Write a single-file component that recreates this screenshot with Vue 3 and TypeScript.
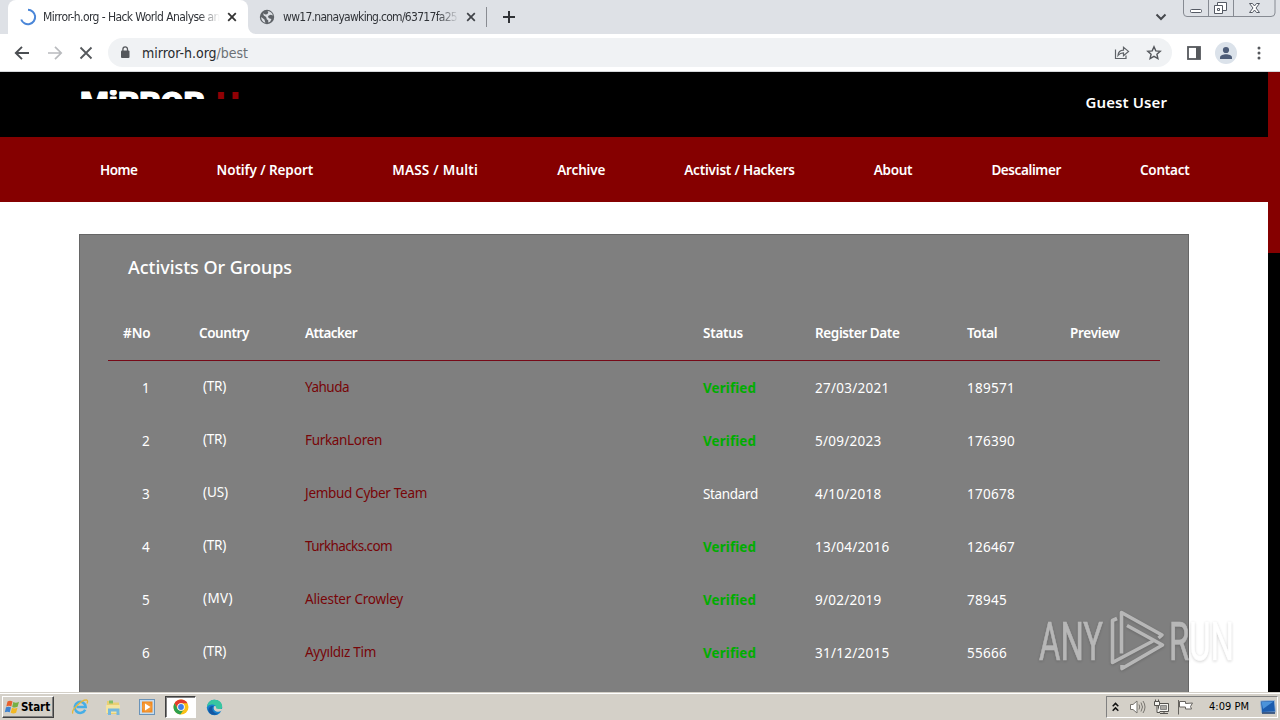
<script setup lang="ts">
import type { Directive } from 'vue'

// Tracks the text so that it takes up the given width in pixels.
const vFit: Directive<HTMLElement, number> = {
  mounted(el, { value }) {
    const n = (el.textContent ?? '').trim().length
    el.style.letterSpacing = (value - el.getBoundingClientRect().width) / n + 'px'
  },
}

interface Row {
  no: number
  country: string
  cw: number
  name: string
  nw: number
  verified: boolean
  date: string
  dw: number
  total: string
  tw: number
}

const nav: { label: string; w: number }[] = [
  { label: 'Home', w: 37.5 },
  { label: 'Notify / Report', w: 96.5 },
  { label: 'MASS / Multi', w: 86 },
  { label: 'Archive', w: 48 },
  { label: 'Activist / Hackers', w: 110.5 },
  { label: 'About', w: 38.5 },
  { label: 'Descalimer', w: 69.5 },
  { label: 'Contact', w: 49.5 },
]

const heads: { label: string; w: number }[] = [
  { label: '#No', w: 27.5 },
  { label: 'Country', w: 50 },
  { label: 'Attacker', w: 52 },
  { label: 'Status', w: 40 },
  { label: 'Register Date', w: 84.5 },
  { label: 'Total', w: 30 },
  { label: 'Preview', w: 49.5 },
]

const rows: Row[] = [
  { no: 1, country: '(TR)', cw: 23, name: 'Yahuda', nw: 44, verified: true, date: '27/03/2021', dw: 74.5, total: '189571', tw: 48 },
  { no: 2, country: '(TR)', cw: 23, name: 'FurkanLoren', nw: 77, verified: true, date: '5/09/2023', dw: 66.5, total: '176390', tw: 48 },
  { no: 3, country: '(US)', cw: 25, name: 'Jembud Cyber Team', nw: 122, verified: false, date: '4/10/2018', dw: 66.5, total: '170678', tw: 48 },
  { no: 4, country: '(TR)', cw: 23, name: 'Turkhacks.com', nw: 87, verified: true, date: '13/04/2016', dw: 74.5, total: '126467', tw: 48 },
  { no: 5, country: '(MV)', cw: 30, name: 'Aliester Crowley', nw: 98, verified: true, date: '9/02/2019', dw: 66.5, total: '78945', tw: 40 },
  { no: 6, country: '(TR)', cw: 23, name: 'Ayyıldız Tim', nw: 71, verified: true, date: '31/12/2015', dw: 74.5, total: '55666', tw: 40 },
]
</script>

<template>
  <div class="screen">
    <header class="tabs">
      <div class="tab active">
        <svg class="spin" width="18" height="18" viewBox="0 0 18 18"><path d="M9 1.8A7.2 7.2 0 1 1 2.2 11.5" fill="none" stroke="#4a86d8" stroke-width="2" /></svg>
        <div class="title"><span v-fit="183">Mirror-h.org - Hack World Analyse and</span></div>
        <svg class="x" width="10" height="10" viewBox="0 0 10 10"><path d="M1.2 1.2l7.6 7.6M8.8 1.2L1.2 8.8" stroke="#333" stroke-width="1.8" /></svg>
        <svg class="foot" width="8" height="8"><path d="M0 0v8h8A8 8 0 0 1 0 0z" fill="#fff" /></svg>
      </div>
      <div class="tab">
        <svg class="globe" width="16" height="16" viewBox="0 0 16 16">
          <circle cx="8" cy="8" r="7.2" fill="#5f6368" />
          <path d="M2.2 8l3.2 2.6 1 3.2C3.600 13.200 2 10.500 2.200 8zM4 4.200l2.300 1.200 1.900-.2 1.100-1.500L8.600 2c2.800.1 4.900 2.100 5.300 4.500l-2.100-.8-2.100.8-.8 1.600 1.600 1.500 2 .5-1.400 2.700-1.900.8.1-2.200-1.500-1.200-.7-2.200-2.300-1.400z" fill="#dee1e6" />
        </svg>
        <div class="title second"><span v-fit="174">ww17.nanayawking.com/63717fa25</span></div>
        <svg class="x" width="10" height="10" viewBox="0 0 10 10"><path d="M1.2 1.2l7.6 7.6M8.8 1.2L1.2 8.8" stroke="#3f4247" stroke-width="1.7" /></svg>
      </div>
      <i class="sep"></i>
      <svg class="plus" width="12" height="12"><path d="M6 0v12M0 6h12" stroke="#303236" stroke-width="2" /></svg>
      <svg class="chev" width="12" height="8"><path d="M1.500 1.500l4.500 4.500 4.500-4.500" fill="none" stroke="#45484d" stroke-width="2" /></svg>
      <svg class="winbtns" width="94" height="17" viewBox="0 0 94 17" fill="none" stroke="#868a92">
        <path d="M.5 0v13q0 3.500 3.500 3.500h84q4 0 4-3.500V0M25.500 0v16M50.500 0v16" />
        <rect x="7.500" y="9.500" width="11" height="3" rx="1" fill="#fff" stroke="#555a64" />
        <path d="M34.500 2.500h9v8h-9z" fill="#fff" stroke="#555a64" /><path d="M31.500 5.500h8v8h-8z" fill="#fff" stroke="#555a64" /><path d="M34.500 8.500h2v2h-2z" stroke="#555a64" />
        <path d="M66.500 3.500h3l2 2.500 2-2.500h3l-3.500 4.500 3.500 4.500h-3l-2-2.500-2 2.500h-3l3.500-4.500z" fill="#fff" stroke="#555a64" />
      </svg>
    </header>

    <div class="toolbar">
      <svg class="back" width="16" height="14" viewBox="0 0 16 14" fill="none" stroke="#4b4e52" stroke-width="1.900"><path d="M15 7H2M8 .8L1.800 7 8 13.200" /></svg>
      <svg class="fwd" width="16" height="14" viewBox="0 0 16 14" fill="none" stroke="#b9bbbe" stroke-width="1.700"><path d="M1 7h13M8 .8L14.200 7 8 13.200" /></svg>
      <svg class="stop" width="14" height="14" viewBox="0 0 14 14" stroke="#55585c" stroke-width="1.800"><path d="M1.500 1.500l11 11M12.500 1.500l-11 11" /></svg>
      <div class="omni">
        <svg class="lock" width="10" height="13" viewBox="0 0 10 13"><rect x="1" y="4.500" width="8.500" height="7.500" rx="1" fill="#54575b" /><path d="M2.900 5V3.200a2.300 2.300 0 0 1 4.600 0V5" fill="none" stroke="#54575b" stroke-width="1.300" /></svg>
        <span v-fit="106" class="url">mirror-h.org<em>/best</em></span>
        <svg class="share" width="16" height="15" viewBox="0 0 16 15" fill="none" stroke="#5f6368" stroke-width="1.200"><path d="M1.500 4.500v9h10.500v-3M4 10.500c.3-3.500 2-5.200 5.500-5.300V2.200l5 4.200-5 4.200V7.800c-2.500 0-4 .7-5.500 2.700z" /></svg>
        <svg class="star" width="16" height="16" viewBox="0 0 16 16"><path d="M8 1.800l1.800 4.100 4.400.4-3.300 2.900 1 4.400L8 11.300l-3.900 2.300 1-4.400-3.300-2.900 4.400-.4z" fill="none" stroke="#54575c" stroke-width="1.400" /></svg>
      </div>
      <svg class="panelicon" width="14" height="14"><rect x="1" y="1" width="12" height="12" fill="none" stroke="#55585c" stroke-width="1.800" /><path d="M9 1h4v12H9z" fill="#55585c" /></svg>
      <svg class="user" width="22" height="22"><circle cx="11" cy="11" r="11" fill="#dbe2ea" /><circle cx="11" cy="8" r="3.100" fill="#4d5c78" /><path d="M5 17v-1.500c0-2.500 3.500-3.300 6-3.300s6 .8 6 3.300V17z" fill="#4d5c78" /></svg>
      <svg class="dots" width="4" height="14" fill="#55585c"><circle cx="2" cy="2" r="1.500" /><circle cx="2" cy="7" r="1.500" /><circle cx="2" cy="12" r="1.500" /></svg>
    </div>

    <div class="view">
      <main class="page">
        <div class="brand">
          <svg class="logo" width="164" height="9" viewBox="0 0 164 9" font-family="Roboto" font-weight="900" font-size="31" stroke-width="1" stroke-linejoin="round">
            <text x="1" y="24" textLength="125" lengthAdjust="spacingAndGlyphs" fill="#fff" stroke="#fff">MiRROR</text>
            <text x="137" y="24" textLength="24" lengthAdjust="spacingAndGlyphs" fill="#900004">H</text>
          </svg>
          <span v-fit="81.5" class="guest">Guest User</span>
        </div>
        <nav class="menu">
          <span v-for="n in nav" :key="n.label" v-fit="n.w">{{ n.label }}</span>
        </nav>
        <section class="card">
          <h2><span v-fit="164">Activists Or Groups</span></h2>
          <div class="row head">
            <div v-for="h in heads" :key="h.label"><span v-fit="h.w">{{ h.label }}</span></div>
          </div>
          <div v-for="r in rows" :key="r.no" class="row">
            <div class="no">{{ r.no }}</div>
            <div class="country"><span v-fit="r.cw">{{ r.country }}</span></div>
            <div class="name"><span v-fit="r.nw">{{ r.name }}</span></div>
            <div><span v-if="r.verified" v-fit="53" class="ok">Verified</span><span v-else v-fit="55">Standard</span></div>
            <div><span v-fit="r.dw">{{ r.date }}</span></div>
            <div><span v-fit="r.tw">{{ r.total }}</span></div>
            <div></div>
          </div>
        </section>
      </main>
      <aside class="scroll"><i></i></aside>
    </div>

    <footer class="taskbar">
      <button class="start">
        <svg width="17" height="17" viewBox="0 0 17 17">
          <path d="M3.500 2.500q2.500-1.500 5 0L7.300 7.500q-2.500-1.300-5 0z" fill="#e8602c" /><path d="M9.300 3q2.700 1.400 5.700-.3l-1.400 5q-2.800 1.400-5.400.2z" fill="#76b043" />
          <path d="M2 8.300q2.700-1.300 5 0L5.800 13.300q-2.500-1.300-5 0z" fill="#3f83d0" /><path d="M8 8.800q2.600 1.300 5.500 0l-1.400 5q-2.700 1.500-5.400 0z" fill="#f2b824" />
        </svg>
        <span v-fit="29">Start</span>
      </button>
      <svg class="ie" width="18" height="18" viewBox="0 0 18 18" fill="none"><path d="M14.200 11.700A5.500 5.500 0 1 1 14.700 9H5.500" stroke="#46aee6" stroke-width="2.500" /><path d="M2 15.500C-.5 12.500 10.500 1.500 15.500 2c1.500.3 1.200 2 .5 3.500" stroke="#e5b83c" stroke-width="1.300" /></svg>
      <svg class="folder" width="17" height="17" viewBox="0 0 17 17"><path d="M2 2h5l1 1.500h6V15H2z" fill="#e9cf72" /><path d="M4 1.500h4v3H4z" fill="#83be66" /><path d="M1 6h14v8H1z" fill="#f4e4a0" /><path d="M3 16V9.500h11.500V16h-3v-3.500H6V16z" fill="#75b8de" /></svg>
      <svg class="wmp" width="16" height="16" viewBox="0 0 16 16"><rect x=".5" y=".5" width="15" height="15" fill="#c4dcf0" stroke="#6a93b8" /><rect x="3" y="2.500" width="10.500" height="11" fill="#f28a20" /><circle cx="8" cy="8" r="4.800" fill="#f49a38" /><path d="M6 4.500l5.500 3.500L6 11.500z" fill="#fff" /></svg>
      <div class="running">
        <svg width="16" height="16" viewBox="0 0 16 16"><circle cx="8" cy="8" r="7.500" fill="#fbc116" /><path d="M1.500 4.250A7.500 7.500 0 0 1 14.500 4.250H8A3.800 3.800 0 0 0 4.700 9.900z" fill="#e33b2e" /><path d="M1.500 4.250A7.500 7.500 0 0 0 7.300 15.470L11 10.200A3.800 3.800 0 0 1 4.700 9.900z" fill="#2da04e" /><circle cx="8" cy="8" r="3.800" fill="#fff" /><circle cx="8" cy="8" r="2.900" fill="#3f7fe8" /></svg>
      </div>
      <svg class="edge" width="17" height="17" viewBox="0 0 17 17"><circle cx="8.500" cy="8.500" r="7.700" fill="#1680cd" /><path d="M1 8C1.500 3.500 4.500.8 8.500.8c4.800 0 7.700 3.400 7.700 6.600 0 2.300-1.700 3.700-3.700 3.700-2 0-2.800-.8-2.300-1.500C11.500 6.500 5 3 1 8z" fill="#38c6a0" /><path d="M7.200 7C5 10 7 14.700 12.500 14.500c-5 3.500-11.200-.3-10-4.500C3 8 5 6.500 7.200 7z" fill="#1457a2" /><path d="M8.200 7.200c-1.500 2.500.5 5.700 4.200 5.600 1.700 0 2.700-.6 3.600-1.200l1-1.600h-4.500c-2 0-2.700-.8-2.300-1.500.3-.8-.7-1.800-2-1.300z" fill="#d4d0c8" /></svg>
      <div class="tray">
        <svg class="up" width="7" height="10" viewBox="0 0 7 10" fill="none" stroke="#111" stroke-width="1.500"><path d="M.7 4.200l2.800-2.800 2.800 2.800M.7 8.700l2.800-2.800 2.800 2.800" /></svg>
        <svg class="vol" width="17" height="16" viewBox="0 0 17 16" fill="none" stroke="#77746f"><path d="M1.500 5.500h2.500L8 2v12L4 10.500H1.500z" fill="#fff" /><path d="M10 5.500q1.500 2.500 0 5M12 3.500q3 4.500 0 9M14 2q4 6 0 12" /></svg>
        <svg class="net" width="17" height="16" viewBox="0 0 17 16" fill="#f5f4f0" stroke="#55534f"><path d="M5.500 4.500h10v8h-10z" /><path d="M7.500 6.500h6v4h-6z" fill="#a9a7a2" stroke="#888" /><path d="M7 14.500h8M11 12.500v2" /><path d="M1.500 2.500h5v4h-5zM2.500 .5v2M5.500 .5v2M4 6.500v7h3" /></svg>
        <svg class="flag" width="17" height="16" viewBox="0 0 17 16" fill="#fff" stroke="#66635f"><path d="M1.500 1v14.500M2.500 2.500h6v2l7-.5-2 3.500 1 2.500H8.500v-2h-6z" /></svg>
        <span v-fit="40" class="clock">4:09 PM</span>
        <svg class="desk" width="16" height="14" viewBox="0 0 16 14"><path d="M.5 1l14-.5 1 11.500-14 .5z" fill="#1b5cae" stroke="#9fb8d4" /><path d="M1.500 2l12-.5L3 9z" fill="#4b93da" /><path d="M2 13h13" stroke="#183c70" stroke-width="1.500" /></svg>
      </div>
    </footer>

    <svg class="mark" width="204" height="70" viewBox="0 0 204 70" font-family="Roboto" font-weight="400" font-size="53" fill="#fff">
      <text x="3" y="53.500" textLength="64" lengthAdjust="spacingAndGlyphs" stroke="#fff" stroke-width=".7">ANY</text>
      <g fill="none" stroke="#fff" stroke-width="3.600" stroke-linejoin="round">
        <path d="M85.500 47.500V6.500L126 29l-3.500 3" />
        <path d="M91 19.500l35.500 19.500L86 62.500v-3.500" />
        <path d="M81 12.500l-4.500 2V56.500L117 35" />
      </g>
      <text x="133" y="53.500" textLength="65" lengthAdjust="spacingAndGlyphs" stroke="#fff" stroke-width=".7">RUN</text>
    </svg>
  </div>
</template>

<style>
html, body { margin: 0; overflow: hidden; }
</style>

<style scoped>
* { box-sizing: border-box; }
svg { display: block; flex: none; }
.screen { width: 1280px; height: 720px; position: relative; display: flex; flex-direction: column; overflow: hidden; background: #fff; font: 14px/20px "Noto Sans", "Open Sans", sans-serif; }
.screen span { white-space: nowrap; display: inline-block; }

.tabs { height: 34px; flex: none; background: #dee1e6; display: flex; align-items: center; font: 12px/16px "DejaVu Sans", sans-serif; font-stretch: condensed; color: #303338; }
.tab { height: 34px; display: flex; align-items: center; position: relative; }
.tab.active { margin-left: 8px; width: 240px; background: #fff; border-radius: 8px 8px 0 0; }
.foot { position: absolute; left: 240px; bottom: 0; }
.spin { margin-left: 11px; }
.title { width: 177px; margin-left: 6px; overflow: hidden; mask-image: linear-gradient(90deg, #000 88%, transparent); }
.tab .x { margin-left: 7px; }
.globe { margin-left: 11px; }
.title.second { width: 176px; margin-left: 8px; }
.sep { width: 1px; height: 20px; margin-left: 10px; background: #898c92; }
.plus { margin-left: 16px; }
.chev { margin-left: auto; margin-right: 16px; }
.winbtns { align-self: flex-start; margin-right: 3px; }

.toolbar { height: 38px; flex: none; background: #fff; border-bottom: 1px solid #d5d7da; display: flex; align-items: center; }
.back { margin-left: 14px; }
.fwd { margin-left: 17px; }
.stop { margin-left: 16px; }
.omni { width: 1064px; height: 29px; border-radius: 15px; background: #f0f2f4; margin-left: 15px; display: flex; align-items: center; padding-left: 12px; }
.url { margin-left: 12px; font: 14px/20px "DejaVu Sans", sans-serif; font-stretch: condensed; color: #282b2f; }
.url em { font-style: normal; color: #6b7075; }
.share { margin-left: auto; }
.star { margin-left: 16px; margin-right: 10px; }
.panelicon { margin-left: 15px; }
.user { margin-left: 14px; }
.dots { margin-left: 20px; }

.view { flex: 1; min-height: 0; display: flex; overflow: hidden; }
.page { width: 1268px; overflow: hidden; background: #fff; }
.scroll { width: 12px; background: #000; }
.scroll i { display: block; height: 181px; background: #850000; }
.brand { height: 65px; background: #000; display: flex; justify-content: space-between; padding: 0 101px 0 79px; }
.logo { margin-top: 18px; overflow: hidden; }
.guest { color: #fff; font-weight: 600; font-size: 15px; margin-top: 20px; align-self: flex-start; }
.menu { height: 65px; background: #850000; color: #fff; font-weight: 600; font-size: 13.5px; display: flex; align-items: center; justify-content: space-between; padding: 0 78.500px 0 100px; }
.card { width: 1110px; height: 500px; margin: 32px 0 0 79px; background: #7f7f7f; border: 1px solid #666; padding: 18px 28px; color: #fff; }
h2 { margin: 0 0 0 20px; font-size: 18px; line-height: 28px; font-weight: 500; }
.row { display: grid; grid-template-columns: 76px 106px 398px 112px 152px 103px 90px; padding-left: 15px; height: 53px; align-items: center; line-height: 20px; padding-top: 1px; font-size: 13.5px; }
.row.head { height: 55px; margin-top: 25px; border-bottom: 1px solid #760a18; font-weight: 600; padding: 0 0 1px 15px; }
.no { padding-left: 19px; }
.country { padding-left: 4px; position: relative; top: -2px; }
.name { color: #780508; position: relative; top: -1px; }
.ok { color: #00ad00; font-weight: 700; }

.taskbar { height: 28px; flex: none; background: #d4d0c8; border-top: 1px solid #d4d0c8; box-shadow: inset 0 1px #fff; display: flex; align-items: center; font: 11px/16px "DejaVu Sans", sans-serif; font-stretch: condensed; color: #000; padding-top: 1px; }
.start { width: 52px; height: 22px; margin-left: 2px; padding: 0 0 0 1px; display: flex; align-items: center; gap: 0; border: 1px solid; border-color: #fff #404040 #404040 #fff; box-shadow: inset -1px -1px #808080; background: #d4d0c8; font: bold 11.500px/16px "DejaVu Sans", sans-serif; font-stretch: condensed; color: #000; }
.ie { margin-left: 17px; }
.folder { margin-left: 16px; }
.wmp { margin-left: 17px; }
.running { width: 31px; height: 22px; margin-left: 10px; display: flex; align-items: center; justify-content: center; background: #fff; border: 1px solid; border-color: #404040 #fff #fff #404040; box-shadow: inset 1px 1px #808080; }
.edge { margin-left: 10px; }
.tray { margin-left: auto; margin-right: 2px; width: 172px; height: 22px; display: flex; align-items: center; border: 1px solid; border-color: #808080 #fff #fff #808080; padding-left: 5px; }
.vol { margin-left: 10px; }
.net { margin-left: 7px; }
.flag { margin-left: 7px; }
.clock { margin-left: 15px; }
.desk { margin-left: 11px; }
.mark { position: absolute; left: 1036px; top: 606px; opacity: .44; filter: drop-shadow(0 1px 1.500px rgba(0, 0, 0, .4)); }
</style>
